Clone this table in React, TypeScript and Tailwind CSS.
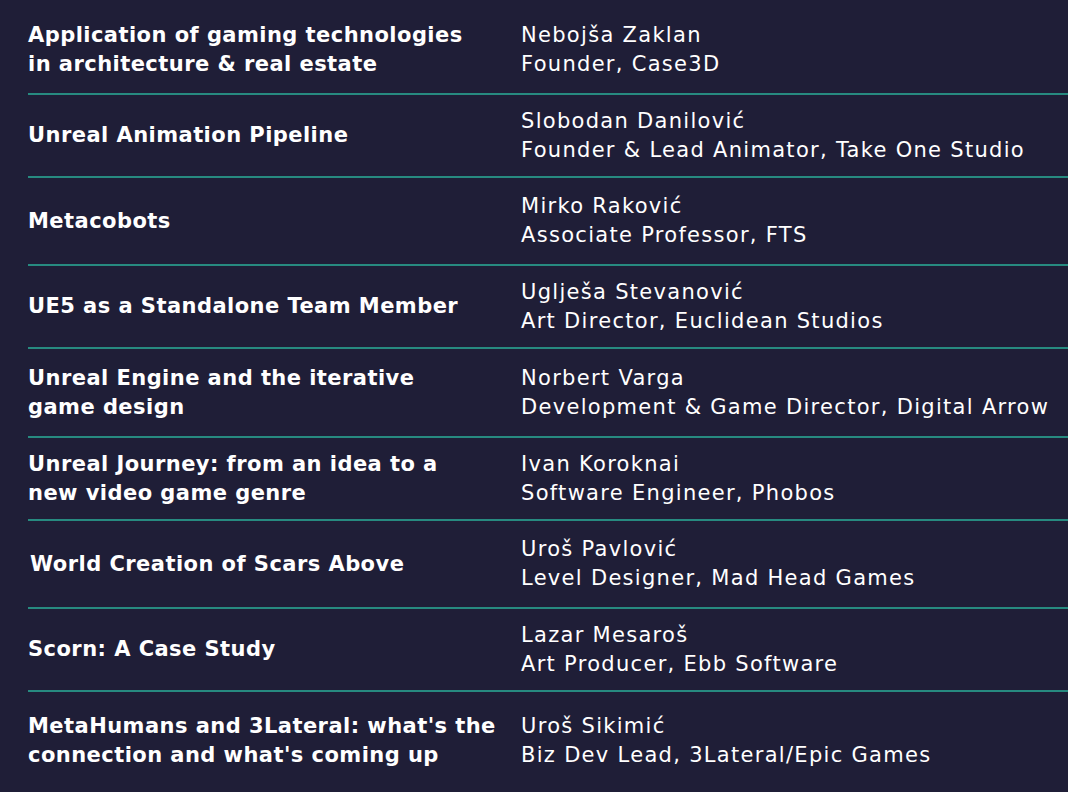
const talks = [
  { title: ["Application of gaming technologies", "in architecture & real estate"], name: "Nebojša Zaklan", role: "Founder, Case3D", h: "h-[93px] pt-[6px]" },
  { title: ["Unreal Animation Pipeline"], name: "Slobodan Danilović", role: "Founder & Lead Animator, Take One Studio", h: "h-[81px]" },
  { title: ["Metacobots"], name: "Mirko Raković", role: "Associate Professor, FTS", h: "h-[86px]" },
  { title: ["UE5 as a Standalone Team Member"], name: "Uglješa Stevanović", role: "Art Director, Euclidean Studios", h: "h-[81px]" },
  { title: ["Unreal Engine and the iterative", "game design"], name: "Norbert Varga", role: "Development & Game Director, Digital Arrow", h: "h-[87px]" },
  { title: ["Unreal Journey: from an idea to a", "new video game genre"], name: "Ivan Koroknai", role: "Software Engineer, Phobos", h: "h-[81px]" },
  { title: ["World Creation of Scars Above"], name: "Uroš Pavlović", role: "Level Designer, Mad Head Games", h: "h-[86px]", indent: true },
  { title: ["Scorn: A Case Study"], name: "Lazar Mesaroš", role: "Art Producer, Ebb Software", h: "h-[81px]" },
  { title: ["MetaHumans and 3Lateral: what's the", "connection and what's coming up"], name: "Uroš Sikimić", role: "Biz Dev Lead, 3Lateral/Epic Games", h: "h-[98px]" },
];

export default function App() {
  return (
    <div className="min-h-[792px] w-full bg-[#1f1e37] text-white font-['DejaVu_Sans',sans-serif] pl-[28px] overflow-hidden">
      {talks.map((t, i) => (
        <div key={i}>
          <div className={`flex items-center ${t.h}`}>
            <div className={`w-[493px] shrink-0 font-bold text-[21px] leading-[29px] tracking-[0.45px] whitespace-nowrap ${t.indent ? "pl-[2px]" : ""}`}>
              {t.title.map((line, j) => (
                <div key={j}>{line}</div>
              ))}
            </div>
            <div className="text-[21px] leading-[29px] tracking-[1.3px] whitespace-nowrap">
              <div>{t.name}</div>
              <div>{t.role}</div>
            </div>
          </div>
          {i < talks.length - 1 && <div className="h-[2px] bg-[#278a80]" />}
        </div>
      ))}
    </div>
  );
}
